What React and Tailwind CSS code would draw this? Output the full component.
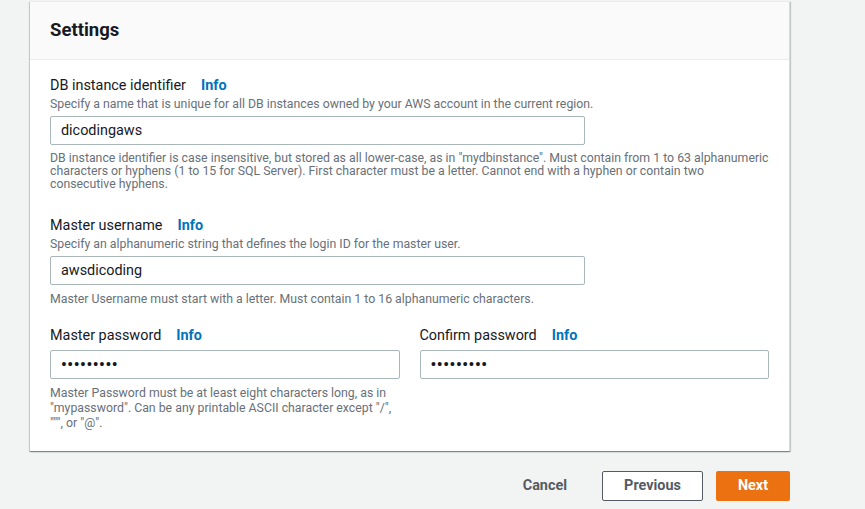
import React from "react";

const Info = () => (
  <span className="ml-[15px] font-bold text-[#0073bb]">Info</span>
);

const Field = ({ label, desc, value, children, password, inputWidth = "w-full" }) => (
  <div className="flex flex-col">
    <div className="text-[14.4px] leading-[20px] text-[#16191f] mt-[1px]">
      {label}
      <Info />
    </div>
    {desc && (
      <div className="text-[12.3px] leading-[16px] text-[#687078]">{desc}</div>
    )}
    <div
      className={`${inputWidth} mt-[4px] h-[29px] border border-[#aab7b8] rounded-[2px] bg-white flex items-center px-[10px] text-[#16191f] ${
        password ? "text-[16px] tracking-[0.6px] font-bold" : "text-[14.4px]"
      }`}
    >
      {value}
    </div>
    {children}
  </div>
);

export default function App() {
  return (
    <div
      className="w-full h-[509px] bg-[#f2f3f3] pl-[30px] pr-[75px] flex flex-col"
      style={{ fontFamily: "Roboto, 'Liberation Sans', Arial, sans-serif" }}
    >
      <div className="bg-white border-t border-t-[#eaeded] border-r border-r-[#d5dbdb] shadow-[0_1px_1px_0_rgba(0,28,36,0.3),1px_1px_1px_0_rgba(0,28,36,0.15),-1px_1px_1px_0_rgba(0,28,36,0.15)] mt-[1px]">
        <div className="h-[58px] bg-[#fafafa] border-b border-[#eaeded] px-[20px] flex items-center">
          <h2 className="text-[18.5px] font-bold text-[#16191f] leading-none">
            Settings
          </h2>
        </div>
        <div className="px-[20px] pt-[15px] pb-[20px] flex flex-col">
          <Field
            label="DB instance identifier"
            desc="Specify a name that is unique for all DB instances owned by your AWS account in the current region."
            value="dicodingaws"
            inputWidth="w-[535px]"
          />
          <p className="mt-[7px] text-[12.3px] leading-[13px] text-[#687078] w-[720px]">
            DB instance identifier is case insensitive, but stored as all lower-case, as in "mydbinstance". Must contain from 1 to 63 alphanumeric characters or hyphens (1 to 15 for SQL Server). First character must be a letter. Cannot end with a hyphen or contain two consecutive hyphens.
          </p>

          <div className="mt-[24px]">
            <Field
              label="Master username"
              desc="Specify an alphanumeric string that defines the login ID for the master user."
              value="awsdicoding"
              inputWidth="w-[535px]"
            >
              <p className="mt-[7px] text-[12.3px] leading-[14px] text-[#687078]">
                Master Username must start with a letter. Must contain 1 to 16 alphanumeric characters.
              </p>
            </Field>
          </div>

          <div className="grid grid-cols-2 gap-[20px] mt-[19px]">
            <Field label="Master password" value="•••••••••" password>
              <p className="mt-[7px] text-[12.3px] leading-[15px] text-[#687078]">
                Master Password must be at least eight characters long, as in "mypassword". Can be any printable ASCII character except "/", """, or "@".
              </p>
            </Field>
            <Field label="Confirm password" value="•••••••••" password />
          </div>
        </div>
      </div>

      <div className="flex items-center justify-end mt-[20px] gap-[13px]">
        <button className="px-[20px] h-[30px] text-[14.4px] font-bold text-[#545b64] mr-[2px]">
          Cancel
        </button>
        <button className="w-[101px] h-[30px] border border-[#545b64] rounded-[2px] bg-white text-[14.4px] font-bold text-[#545b64]">
          Previous
        </button>
        <button className="w-[74px] h-[30px] rounded-[2px] bg-[#ec7211] text-[14.4px] font-bold text-white">
          Next
        </button>
      </div>
    </div>
  );
}
